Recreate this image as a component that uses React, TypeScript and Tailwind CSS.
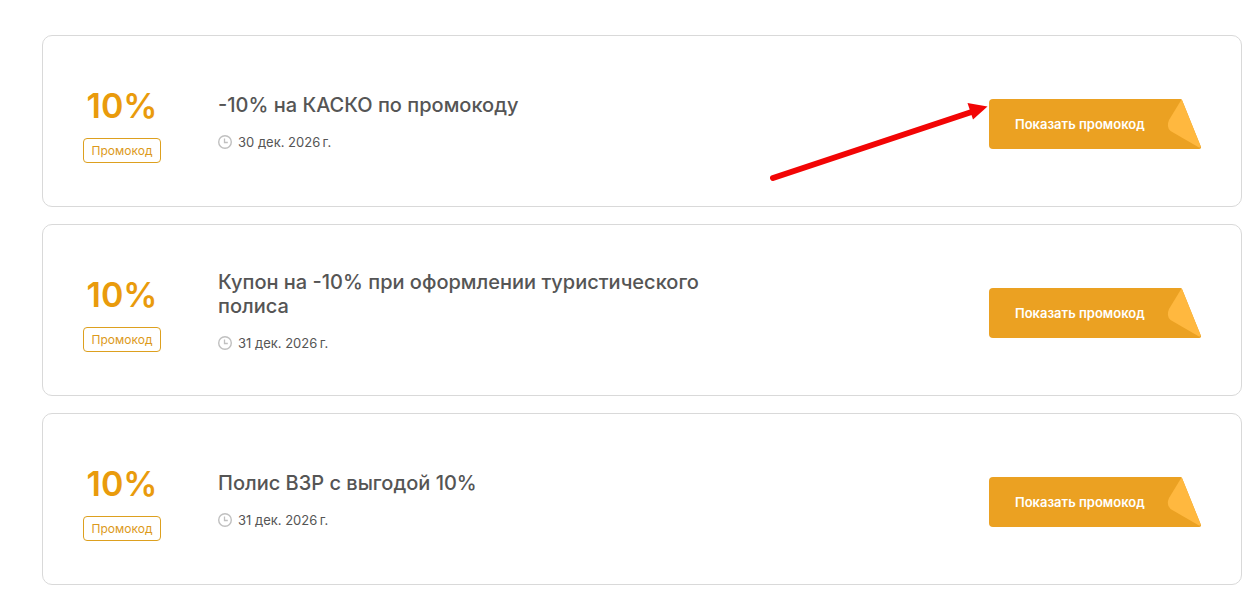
import React from "react";

interface IPromo {
  id: number;
  discount: string;
  title: string;
  date: string;
  isHighlighted?: boolean;
}

const promos: IPromo[] = [
  {
    id: 1,
    discount: "10%",
    title: "-10% на КАСКО по промокоду",
    date: "30 дек. 2026\u202fг.",
    isHighlighted: true,
  },
  {
    id: 2,
    discount: "10%",
    title: "Купон на -10% при оформлении туристического полиса",
    date: "31 дек. 2026\u202fг.",
  },
  {
    id: 3,
    discount: "10%",
    title: "Полис ВЗР с выгодой 10%",
    date: "31 дек. 2026\u202fг.",
  },
];

const ClockIcon = () => (
  <svg
    viewBox="0 0 14 14"
    fill="none"
    stroke="#c0c0c0"
    className="size-3.5 shrink-0"
    aria-hidden="true"
  >
    <circle cx="7" cy="7" r="6.3" strokeWidth="1.4" />
    <path d="M6.500 3.500V7.500H9.800" strokeWidth="1.3" />
  </svg>
);

const Arrow = () => (
  <svg
    viewBox="0 0 220 84"
    className="pointer-events-none absolute top-1.5 right-full h-[84px] w-[220px]"
    aria-hidden="true"
  >
    <path
      d="M4 79L204 12.500"
      stroke="#f20505"
      strokeWidth="6"
      strokeLinecap="round"
    />
    <path d="M218.500 7.500L198.500 4L204 20.500Z" fill="#f20505" />
  </svg>
);

const PromoButton = () => {
  return (
    <button
      type="button"
      className="flex h-[50px] w-[212px] cursor-pointer items-stretch text-[13px] font-semibold text-white"
    >
      <span className="flex grow items-center rounded-l bg-[#eba122] pt-0.5 pl-[26px] whitespace-nowrap">
        Показать промокод
      </span>
      {/* Folded corner */}
      <svg viewBox="0 0 36 50" className="h-[50px] w-9 shrink-0" aria-hidden="true">
        <path
          d="M0 0H15.500Q16.500 0 17 1L35.800 47.500Q36.500 50 34 50H0Z"
          fill="#eba122"
        />
        <path
          d="M16.500 0.500L4 21Q1 28 5.500 32L34 48.500Q36 49 35.500 47L17 1Z"
          fill="#ffb83f"
        />
      </svg>
    </button>
  );
};

const PromoCard = ({ promo }: { promo: IPromo }) => {
  return (
    <article className="flex min-h-[172px] items-center rounded-[10px] border border-[#d9d9d9] bg-white px-10">
      {/* Discount */}
      <div className="flex w-[78px] shrink-0 flex-col items-center pt-1.5">
        <p className="text-[34px] leading-10 font-semibold text-[#e99b0c]">
          {promo.discount}
        </p>
        <span className="mt-3 flex h-[25px] w-full items-center justify-center rounded border border-[#dda01f] pt-0.5 text-xs text-[#dc9a1c]">
          Промокод
        </span>
      </div>

      {/* Title and date */}
      <div className="ml-[57px] max-w-[520px] grow pt-0.5">
        <h2 className="text-xl leading-6 font-medium text-[#555555]">
          {promo.title}
        </h2>
        <p className="mt-4 flex items-center gap-1.5 text-[13px] leading-[18px] text-[#555555]">
          <ClockIcon />
          {promo.date}
        </p>
      </div>

      {/* Action */}
      <div className="relative ml-auto shrink-0 pt-1.5">
        {promo.isHighlighted && <Arrow />}
        <PromoButton />
      </div>
    </article>
  );
};

const App = () => {
  return (
    <main className="flex flex-col gap-[17px] bg-white pt-[35px] pr-2.5 pb-4 pl-[42px] font-[Inter,sans-serif]">
      {promos.map((promo) => (
        <PromoCard key={promo.id} promo={promo} />
      ))}
    </main>
  );
};

export default App;
